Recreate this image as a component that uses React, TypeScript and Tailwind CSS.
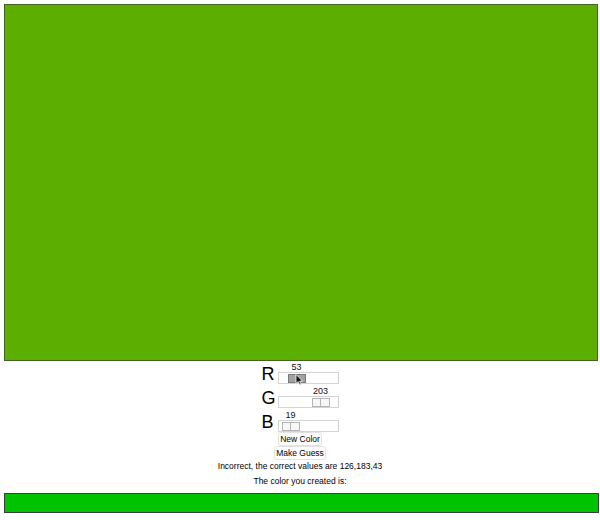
import React from "react";

function Slider({ label, value, active }: { label: string; value: number; active?: boolean }) {
  const trackW = 60;
  const thumbW = 18;
  const left = Math.round((value / 255) * (trackW - thumbW));
  const half = active
    ? "h-full w-[9px] border border-[#7a7a7a] bg-[#a3a3a3]"
    : "h-full w-[9px] border border-[#b5b5b5] bg-[#f7f7f7]";
  const half2 = active
    ? "h-full w-[9px] border border-l-0 border-[#7a7a7a] bg-[#a3a3a3]"
    : "h-full w-[9px] border border-l-0 border-[#b5b5b5] bg-[#f7f7f7]";
  return (
    <div className="flex h-[24px] items-end justify-center pb-[1px]">
      <div className="mr-[4px] mb-[3px] w-[12px] text-[18px] leading-[14px] text-black">{label}</div>
      <div className="relative h-[23px] w-[61px]">
        <div
          className="absolute top-[1px] w-[18px] text-center text-[9px] leading-[10px] text-[#111]"
          style={{ left: left + 1 }}
        >
          {value}
        </div>
        <div className="absolute bottom-0 left-0 h-[12px] w-[61px] border border-[#d4d4d4] bg-white">
          <div className="absolute top-[1px] flex h-[9px] w-[18px]" style={{ left: left }}>
            <div className={half} />
            <div className={half2} />
          </div>
        </div>
        {active && (
          <svg
            className="absolute"
            style={{ left: left + 8, top: 13 }}
            width="9"
            height="12"
            viewBox="0 0 9 12"
          >
            <path d="M1 0.5 L1 9.5 L3.2 7.6 L4.8 11 L6.2 10.4 L4.7 7.1 L7.6 7.1 Z" fill="#111" stroke="#fff" strokeWidth="0.8" />
          </svg>
        )}
      </div>
    </div>
  );
}

export default function App() {
  return (
    <div className="h-[521px] w-[600px] bg-white font-['Liberation_Sans',Arial,sans-serif] text-black">
      <div className="pt-[4px] pl-[4px]">
        <div className="h-[357px] w-[594px] border border-[#44631f] bg-[#5cae00]" />
      </div>
      <div className="flex flex-col items-center">
        <Slider label="R" value={53} active />
        <Slider label="G" value={203} />
        <Slider label="B" value={19} />
        <button className="mt-[-1px] h-[14px] rounded-[3px] border border-[#e2e2e2] bg-white px-[1px] text-[8.5px] leading-[12px] text-black">
          New Color
        </button>
        <button className="h-[14px] rounded-[3px] border border-[#e2e2e2] bg-white px-[1px] text-[8.5px] leading-[12px] text-black">
          Make Guess
        </button>
        <div className="mt-[-1px] h-[15px] text-[8.5px] leading-[15px]">Incorrect, the correct values are 126,183,43</div>
        <div className="h-[15px] text-[8.5px] leading-[15px]">The color you created is:</div>
      </div>
      <div className="pl-[4px] pt-[4px]">
        <div className="h-[20px] w-[595px] border border-[#3d3d3d] bg-[#00c300]" />
      </div>
    </div>
  );
}
